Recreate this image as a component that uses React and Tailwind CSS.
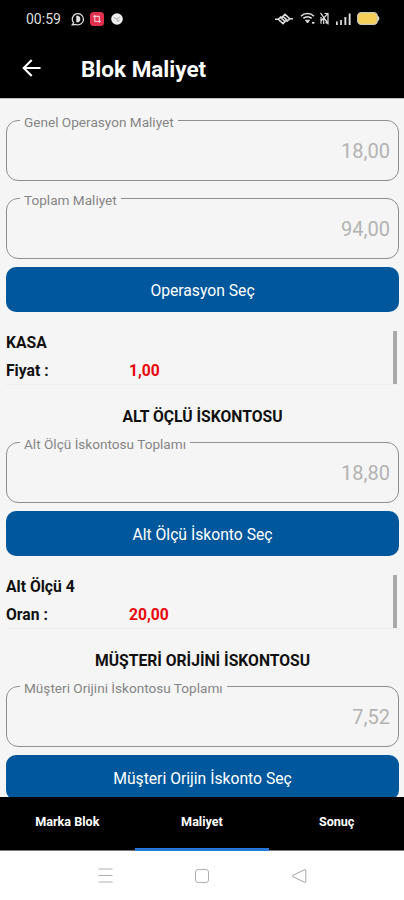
import React from "react";

const sections = [
  {
    title: "",
    label: "Toplam Maliyet",
    total: "94,00",
    button: "Operasyon Seç",
    item: { name: "KASA", key: "Fiyat :", value: "1,00" },
  },
  {
    title: "ALT ÖÇLÜ İSKONTOSU",
    label: "Alt Ölçü İskontosu Toplamı",
    total: "18,80",
    button: "Alt Ölçü İskonto Seç",
    item: { name: "Alt Ölçü 4", key: "Oran :", value: "20,00" },
  },
  {
    title: "MÜŞTERİ ORİJİNİ İSKONTOSU",
    label: "Müşteri Orijini İskontosu Toplamı",
    total: "7,52",
    button: "Müşteri Orijin İskonto Seç",
  },
];

const tabs = ["Marka Blok", "Maliyet", "Sonuç"];

const StatusBar = () => (
  <div className="flex h-[37px] items-center justify-between pl-[26px] pr-[24px] text-[#dedede]">
    <div className="flex items-center">
      <span className="w-[45px] whitespace-nowrap text-[14px] leading-4">00:59</span>
      <svg className="h-[14px] w-[14px]" viewBox="0 0 14 14" fill="none" stroke="currentColor">
        <path d="M2.6 10.8A5.6 5.6 0 1 1 5 12.5L1.2 12.8Z" strokeWidth="1.3" />
        <path d="M6 3.8v6.4M7.2 4.4c2 .6 2 4.6 0 5.2Z" strokeWidth="1.5" fill="currentColor" />
      </svg>
      <svg className="ml-[5px] h-[14px] w-[14px]" viewBox="0 0 14 14" fill="none">
        <rect width="14" height="14" rx="3.5" fill="#e0304d" />
        <path d="M3 4.3h6.3v6.5M4.8 3v6.5H11" stroke="#ffc4cd" strokeWidth="1.2" />
      </svg>
      <svg className="ml-[7px] h-[12px] w-[12px]" viewBox="0 0 12 12">
        <circle cx="6" cy="6" r="5.8" fill="#eee" />
        <path d="M2.5 4.5l3.5 1.500 3-2M6 6.200l.5 2.300 2.500-1.500" stroke="#aaa" fill="none" />
      </svg>
    </div>
    <div className="flex items-center">
      <svg className="h-[14px] w-[20px]" viewBox="0 0 20 14" fill="none" stroke="currentColor">
        <path d="M1 7.2h3.2L9 11.6l3.8-3.8L9.5 5M19 6.8h-3.2L11 2.4 7.2 6.2l3.3 2.8" strokeWidth="1.6" />
        <path d="M4.2 7.2L7.4 4.4M15.8 6.8l-3.2 3" strokeWidth="1.4" />
      </svg>
      <svg className="ml-[6px] h-[13px] w-[15px]" viewBox="0 0 15 13" fill="none" stroke="currentColor">
        <path d="M1 4.2c3.4-3.6 9.6-3.6 13 0M3.3 6.3c2.4-2 6-2 8.4 0" strokeWidth="1.6" />
        <path d="M5.5 8.2h4L7.5 11Z" fill="currentColor" />
        <path d="M12 10.8h2.4" strokeWidth="1.8" />
      </svg>
      <svg className="ml-[5px] h-[13px] w-[9px]" viewBox="0 0 9 13" fill="none" stroke="currentColor">
        <path d="M1 11.8V5M3.7 12V5.5M6.2 11.8V8M8 12V1.5H4.5M.5.8l8 11.5M8.3 1.2L1 9" strokeWidth="1.2" />
      </svg>
      <svg className="ml-[7px] h-[12px] w-[15px]" viewBox="0 0 15 12" fill="currentColor">
        <rect x="0" y="8.5" width="1.7" height="3.5" />
        <rect x="4.2" y="7" width="1.7" height="5" />
        <rect x="8.4" y="4" width="1.9" height="8" />
        <rect x="12.7" y="0.5" width="1.9" height="11.5" />
      </svg>
      <svg className="ml-[6px] h-[13px] w-[23px]" viewBox="0 0 23 13">
        <path d="M20 4h1.2c1.6 1 1.6 4 0 5H20Z" fill="#d5d0bf" />
        <rect x=".7" y=".7" width="19.6" height="11.6" rx="3.6" fill="#f5cf58" stroke="#cfcabb" strokeWidth="1.3" />
      </svg>
    </div>
  </div>
);

const Field = ({ label, value }) => (
  <fieldset className="h-[69px] rounded-[12px] border border-[#8f8f8f] pl-[13px] pr-[8px]">
    <legend className="h-[17px] whitespace-nowrap px-[4px] text-[13.6px] leading-[20px] text-[#858585]">
      {label}
    </legend>
    <p className="pt-[10px] text-right text-[20px] leading-6 text-[#b3b3b3]">{value}</p>
  </fieldset>
);

const Item = ({ name, label, value }) => (
  <div className="mt-[19px] flex h-[54px] justify-between border-b border-[#eeeeee] pr-[2px] text-[15.7px] font-bold text-[#111]">
    <div className="pt-[2px]">
      <p className="leading-5">{name}</p>
      <div className="mt-2 flex leading-5">
        <p className="w-[123px]">{label}</p>
        <p className="text-[#e8080c]">{value}</p>
      </div>
    </div>
    <div className="w-[4px] bg-[#aaaaaa]"></div>
  </div>
);

const App = () => {
  return (
    <div className="flex h-[900px] w-[404px] flex-col overflow-hidden bg-[#f5f5f5] font-['Roboto',sans-serif]">
      <header className="h-[99px] shrink-0 border-b border-[#c4c0c0] bg-black">
        <StatusBar />
        <div className="flex h-[62px] items-center pl-[22px] text-white">
          <svg className="h-[18px] w-[19px]" viewBox="0 0 19 18" fill="none" stroke="currentColor" strokeWidth="2.1">
            <path d="M18.5 9H1.5M9.7 1L1.7 9l8 8" />
          </svg>
          <h1 className="ml-[40px] pt-[2px] text-[22.5px] font-bold leading-7">Blok Maliyet</h1>
        </div>
      </header>

      <main className="flex-1 overflow-hidden pl-[6px] pr-[5px] pt-[13px]">
        <Field label="Genel Operasyon Maliyet" value="18,00" />
        {sections.map((section, index) => (
          <section key={index} className={index === 0 ? "mt-[9px]" : ""}>
            {section.title && (
              <h2 className="flex h-[49px] items-end justify-center pb-[7px] text-[15.7px] font-bold leading-5 text-[#111]">
                {section.title}
              </h2>
            )}
            <Field label={section.label} value={section.total} />
            <button className="mt-[8px] block h-[45px] w-full rounded-[10px] bg-[#01579b] pt-[3px] text-[15.7px] text-white">
              {section.button}
            </button>
            {section.item && (
              <Item name={section.item.name} label={section.item.key} value={section.item.value} />
            )}
          </section>
        ))}
      </main>

      <nav className="grid h-[54px] shrink-0 grid-cols-3 bg-black text-[12.6px] font-bold text-white">
        {tabs.map((tab) => (
          <div
            key={tab}
            className={
              tab === "Maliyet"
                ? "flex justify-center border-b-[3px] border-[#2478d8] pt-[16px]"
                : "flex justify-center border-b border-[#777] pt-[16px]"
            }
          >
            {tab}
          </div>
        ))}
      </nav>

      <footer className="flex h-[49px] shrink-0 items-center bg-white pl-[98px] text-[#b0b0b0]">
        <svg className="h-[15px] w-[15px]" viewBox="0 0 15 15" stroke="currentColor" strokeWidth="1.2">
          <path d="M.5 1h14M.5 7.5h14M.5 14h14" />
        </svg>
        <div className="ml-[82px] h-[14px] w-[14px] rounded-[3px] border border-current"></div>
        <svg className="ml-[83px] h-[14px] w-[15px]" viewBox="0 0 15 14" fill="none" stroke="currentColor" strokeWidth="1.1">
          <path d="M1.2 6.2L12.4.8q1.4-.4 1.4 1v10.4q0 1.4-1.4 1L1.2 7.8q-1-.8 0-1.6Z" />
        </svg>
      </footer>
    </div>
  );
};

export default App;
